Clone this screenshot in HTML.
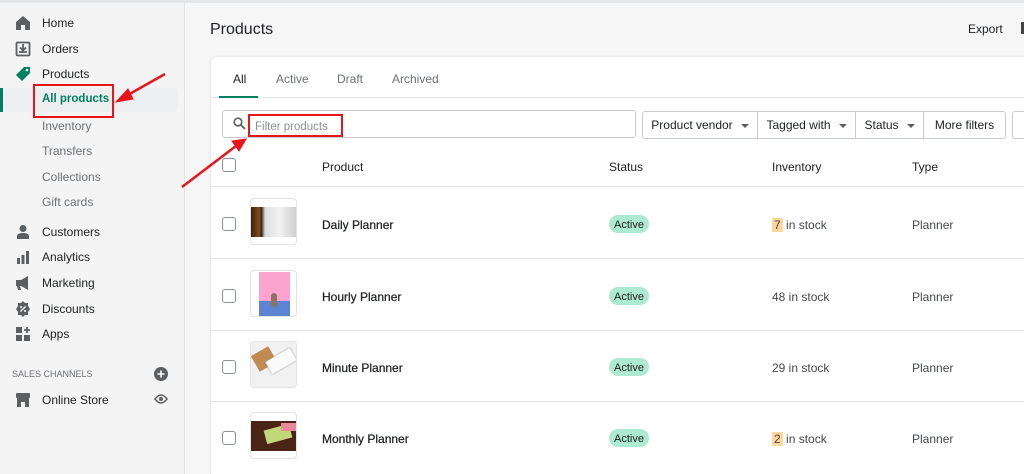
<!DOCTYPE html>
<html><head><meta charset="utf-8"><style>
*{margin:0;padding:0;box-sizing:border-box}
body{width:1024px;height:474px;overflow:hidden;background:#f6f6f7;font-family:"Liberation Sans",sans-serif;color:#202223;position:relative}
.a{position:absolute;white-space:nowrap}
.nav{font-size:12px;left:42px}
.sub{font-size:12px;left:42px;color:#6d7175}
.ic{position:absolute;left:15px;width:16px;height:16px}
.btn{position:absolute;top:111px;height:28px;border:1px solid #c9cccf;background:#fff;font-size:12px;line-height:26px;text-align:center;color:#202223}
.caret{display:inline-block;border:4px solid transparent;border-top:4px solid #5c5f62;border-bottom:0;margin-left:8px;vertical-align:middle}
.row{position:absolute;left:211px;width:813px;height:72px;border-top:1px solid #e1e3e5;background:#fff}
.cb{position:absolute;left:11px;width:14px;height:14px;border:1.5px solid #8c9196;border-radius:3px;background:#fff}
.th{position:absolute;left:39px;width:47px;height:47px;border:1px solid #e1e3e5;border-radius:4px;background:#fff;overflow:hidden}
.pn{position:absolute;left:111px;font-size:12px;-webkit-text-stroke:0.25px #202223}
.badge{position:absolute;left:398px;width:40px;height:18px;border-radius:9px;background:#aee9d1;font-size:11px;line-height:20px;text-align:center;color:#202223;padding-top:0}
.inv{position:absolute;left:561px;font-size:12px;color:#44474a}
.ty{position:absolute;left:701px;font-size:12px;color:#44474a}
</style></head><body>
<div class="a" style="left:0;top:0;width:1024px;height:3px;background:#e4e5e7"></div>
<div class="a" style="left:0;top:3px;width:185px;height:471px;background:#f4f4f4;border-right:1px solid #e1e3e5"></div>
<svg class="ic" style="top:15px" viewBox="0 0 16 16"><path d="M8 1L1 7v8h5v-5h4v5h5V7z" fill="#5c5f62"/></svg>
<div class="a nav" style="top:16px">Home</div>
<svg class="ic" style="top:41px" viewBox="0 0 16 16"><rect x="1.5" y="1.5" width="13" height="13" rx="1" fill="none" stroke="#5c5f62" stroke-width="1.8"/><path d="M8 3v6M5 6.5l3 3 3-3M4 11h8" stroke="#5c5f62" stroke-width="1.8" fill="none"/></svg>
<div class="a nav" style="top:42px">Orders</div>
<svg class="ic" style="top:66px" viewBox="0 0 16 16"><path d="M9 1h6v6l-8 8-6-6z" fill="#008060"/><circle cx="12" cy="4" r="1.3" fill="#fff"/></svg>
<div class="a nav" style="top:67px">Products</div>
<div class="a" style="left:5px;top:88px;width:173px;height:24px;background:#edeeef;border-radius:3px"></div>
<div class="a" style="left:0;top:88px;width:3px;height:24px;background:#008060"></div>
<div class="a nav" style="top:93px;color:#008060;font-weight:bold;font-size:11.5px">All products</div>
<div class="a sub" style="top:119px">Inventory</div>
<div class="a sub" style="top:144px">Transfers</div>
<div class="a sub" style="top:170px">Collections</div>
<div class="a sub" style="top:195px">Gift cards</div>
<svg class="ic" style="top:224px" viewBox="0 0 16 16"><circle cx="8" cy="4.5" r="3.5" fill="#5c5f62"/><path d="M2 15v-2.5C2 10 4 9 8 9s6 1 6 3.5V15z" fill="#5c5f62"/></svg>
<div class="a nav" style="top:225px">Customers</div>
<svg class="ic" style="top:249px" viewBox="0 0 16 16"><rect x="2" y="9" width="3" height="6" fill="#5c5f62"/><rect x="6.5" y="6" width="3" height="9" fill="#5c5f62"/><rect x="11" y="2" width="3" height="13" fill="#5c5f62"/></svg>
<div class="a nav" style="top:250px">Analytics</div>
<svg class="ic" style="top:275px" viewBox="0 0 16 16"><path d="M1 5h5l7-4v14l-7-4H5l1 4H3l-1-4H1z" fill="#5c5f62"/></svg>
<div class="a nav" style="top:276px">Marketing</div>
<svg class="ic" style="top:301px" viewBox="0 0 16 16"><path d="M8 0l2 2h3v3l2 3-2 3v3h-3l-2 2-2-2H3v-3L1 8l2-3V2h3z" fill="#5c5f62"/><path d="M5.5 10.5l5-5" stroke="#fff" stroke-width="1.3"/><circle cx="6" cy="6" r="1" fill="#fff"/><circle cx="10" cy="10" r="1" fill="#fff"/></svg>
<div class="a nav" style="top:302px">Discounts</div>
<svg class="ic" style="top:326px" viewBox="0 0 16 16"><rect x="1" y="1" width="6" height="6" fill="#5c5f62"/><rect x="1" y="9" width="6" height="6" fill="#5c5f62"/><rect x="9" y="9" width="6" height="6" fill="#5c5f62"/><path d="M12 1v6M9 4h6" stroke="#5c5f62" stroke-width="1.8"/></svg>
<div class="a nav" style="top:327px">Apps</div>
<div class="a" style="left:12px;top:369px;font-size:9px;color:#6d7175">SALES CHANNELS</div>
<svg class="a" style="left:154px;top:367px" width="14" height="14" viewBox="0 0 14 14"><circle cx="7" cy="7" r="7" fill="#5c5f62"/><path d="M7 3.5v7M3.5 7h7" stroke="#fff" stroke-width="1.6"/></svg>
<svg class="ic" style="top:392px" viewBox="0 0 16 16"><rect x="1" y="1" width="14" height="5" rx="1" fill="#5c5f62"/><path d="M2 6h12v9H10v-5H6v5H2z" fill="#5c5f62"/></svg>
<div class="a nav" style="top:393px">Online Store</div>
<svg class="a" style="left:154px;top:394px" width="14" height="10" viewBox="0 0 14 10"><path d="M1 5q6-8 12 0q-6 8-12 0z" fill="none" stroke="#5c5f62" stroke-width="1.5"/><circle cx="7" cy="5" r="2" fill="#5c5f62"/></svg>
<div class="a" style="left:210px;top:21px;font-size:16px">Products</div>
<div class="a" style="left:968px;top:22px;font-size:12px">Export</div>
<div class="a" style="left:1021px;top:22px;width:3px;height:12px;background:#444"></div>
<div class="a" style="left:211px;top:57px;width:813px;height:417px;background:#fff;border-radius:6px 0 0 0;box-shadow:0 0 2px rgba(0,0,0,.15)"></div>
<div class="a" style="left:233px;top:72px;font-size:12px">All</div>
<div class="a" style="left:276px;top:72px;font-size:12px;color:#6d7175">Active</div>
<div class="a" style="left:337px;top:72px;font-size:12px;color:#6d7175">Draft</div>
<div class="a" style="left:392px;top:72px;font-size:12px;color:#6d7175">Archived</div>
<div class="a" style="left:211px;top:97px;width:813px;height:1px;background:#e1e3e5"></div>
<div class="a" style="left:219px;top:96px;width:39px;height:2px;background:#008060"></div>
<div class="a" style="left:222px;top:110px;width:414px;height:28px;border:1px solid #c9cccf;border-radius:3px;background:#fff"></div>
<svg class="a" style="left:233px;top:117px" width="13" height="13" viewBox="0 0 13 13"><circle cx="5" cy="5" r="3.8" fill="none" stroke="#5c5f62" stroke-width="1.6"/><path d="M8 8l4 4" stroke="#5c5f62" stroke-width="1.8"/></svg>
<div class="a" style="left:255px;top:119px;font-size:11.5px;color:#8c9196;line-height:14px;padding-top:0;margin-top:1px">Filter products</div>
<div class="btn" style="left:642px;width:116px;border-radius:3px 0 0 3px">Product vendor<span class="caret"></span></div>
<div class="btn" style="left:757px;width:99px">Tagged with<span class="caret"></span></div>
<div class="btn" style="left:855px;width:69px">Status<span class="caret"></span></div>
<div class="btn" style="left:923px;width:83px;border-radius:0 3px 3px 0">More filters</div>
<div class="btn" style="left:1012px;width:20px;border-radius:3px"></div>
<div class="a" style="left:222px;top:158px;width:14px;height:14px;border:1.5px solid #8c9196;border-radius:3px"></div>
<div class="a" style="left:322px;top:160px;font-size:12px">Product</div>
<div class="a" style="left:609px;top:160px;font-size:12px">Status</div>
<div class="a" style="left:772px;top:160px;font-size:12px">Inventory</div>
<div class="a" style="left:912px;top:160px;font-size:12px">Type</div>
<div class="row" style="top:186px">
<div class="cb" style="top:30px"></div>
<div class="th" style="top:11px"><div style="position:absolute;left:0;top:8px;width:47px;height:30px;background:linear-gradient(90deg,#3a2210 0,#8b4a1a 18%,#222 22%,#ddd 30%,#f2f2f2 60%,#ccc 100%)"></div></div>
<div class="pn" style="top:31px">Daily Planner</div>
<div class="badge" style="top:28px">Active</div>
<div class="inv" style="top:31px"><span style="background:#ffd79d;padding:0 2px">7</span> in stock</div>
<div class="ty" style="top:31px">Planner</div>
</div>
<div class="row" style="top:258px">
<div class="cb" style="top:30px"></div>
<div class="th" style="top:11px"><div style="position:absolute;left:8px;top:1px;width:31px;height:29px;background:#fca3cf"></div><div style="position:absolute;left:8px;top:30px;width:31px;height:16px;background:#5d83d2"></div><div style="position:absolute;left:20px;top:22px;width:6px;height:14px;background:#8a7560;border-radius:3px"></div></div>
<div class="pn" style="top:31px">Hourly Planner</div>
<div class="badge" style="top:28px">Active</div>
<div class="inv" style="top:31px">48 in stock</div>
<div class="ty" style="top:31px">Planner</div>
</div>
<div class="row" style="top:330px">
<div class="cb" style="top:29px"></div>
<div class="th" style="top:10px;background:#f1f1f1"><div style="position:absolute;left:3px;top:8px;width:20px;height:18px;background:#c08a50;transform:rotate(-30deg)"></div><div style="position:absolute;left:16px;top:12px;width:28px;height:14px;background:#fafafa;transform:rotate(-30deg);box-shadow:0 0 2px #999"></div></div>
<div class="pn" style="top:30px">Minute Planner</div>
<div class="badge" style="top:27px">Active</div>
<div class="inv" style="top:30px">29 in stock</div>
<div class="ty" style="top:30px">Planner</div>
</div>
<div class="row" style="top:401px">
<div class="cb" style="top:29px"></div>
<div class="th" style="top:10px"><div style="position:absolute;left:0;top:8px;width:47px;height:30px;background:#4a2414"></div><div style="position:absolute;left:14px;top:14px;width:26px;height:14px;background:#c3d67a;transform:rotate(-15deg)"></div><div style="position:absolute;left:30px;top:10px;width:16px;height:8px;background:#e88a9a"></div></div>
<div class="pn" style="top:30px">Monthly Planner</div>
<div class="badge" style="top:27px">Active</div>
<div class="inv" style="top:30px"><span style="background:#ffd79d;padding:0 2px">2</span> in stock</div>
<div class="ty" style="top:30px">Planner</div>
</div>
<div class="a" style="left:33px;top:84px;width:81px;height:34px;border:2px solid #e8141c"></div>
<div class="a" style="left:248px;top:114px;width:95px;height:23px;border:2px solid #e8141c"></div>
<svg class="a" style="left:0;top:0" width="1024" height="474"><g stroke="#e8141c" stroke-width="2.5" fill="#e8141c"><line x1="165" y1="74" x2="126" y2="96"/><path d="M116 102L128 89L133 99z" stroke-width="1"/><line x1="182" y1="187" x2="236" y2="146"/><path d="M246 139L232 141L239 151z" stroke-width="1"/></g></svg>
</body></html>
